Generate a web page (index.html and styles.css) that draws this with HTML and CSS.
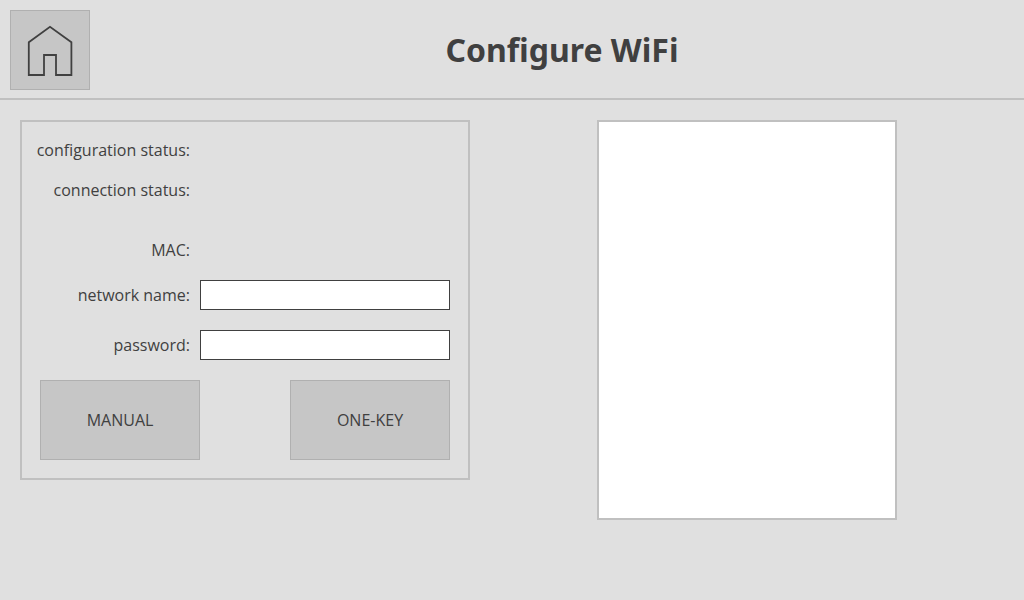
FILE: index.html
```html
<!DOCTYPE html>
<html lang="en">
<head>
<meta charset="utf-8">
<meta name="viewport" content="width=device-width, initial-scale=1">
<title>Configure WiFi</title>
<link rel="stylesheet" href="styles.css">
</head>
<body class="page">
<header class="topbar">
  <button class="button home" type="button" aria-label="Home">
    <svg class="home-icon" viewBox="0 0 50 56" width="50" height="56" aria-hidden="true">
      <path d="M3.8 53V20.2L25 4.8L46.4 20.2V53H31V33H19V53Z" fill="none" stroke="currentColor" stroke-width="1.8"/>
    </svg>
  </button>
  <h1 class="title">Configure WiFi</h1>
</header>
<main class="content">
  <form class="panel">
    <div class="row">
      <span class="label">configuration status:</span>
      <output class="value"></output>
    </div>
    <div class="row">
      <span class="label">connection status:</span>
      <output class="value"></output>
    </div>
    <div class="row row-spaced">
      <span class="label">MAC:</span>
      <output class="value"></output>
    </div>
    <div class="row">
      <label class="label" for="network">network name:</label>
      <input class="field" id="network" type="text">
    </div>
    <div class="row">
      <label class="label" for="password">password:</label>
      <input class="field" id="password" type="password">
    </div>
    <div class="actions">
      <button class="button action" type="button">MANUAL</button>
      <button class="button action" type="button">ONE-KEY</button>
    </div>
  </form>
  <section class="networks">
    <div class="network-list"></div>
  </section>
</main>
</body>
</html>
```

FILE: styles.css
```css
* {
  box-sizing: border-box;
}

.page {
  margin: 0;
  background: #e0e0e0;
  color: #404040;
  font: 16px/20px "Open Sans", "Noto Sans", sans-serif;
}

.topbar {
  display: flex;
  align-items: center;
  gap: 10px;
  padding: 10px 0 8px 10px;
  border-bottom: 2px solid #c0c0c0;
}

.title {
  flex: 1;
  margin: 0;
  text-align: center;
  font-family: "Noto Sans", "Open Sans", sans-serif;
  font-size: 32px;
  line-height: 40px;
}

.button {
  display: flex;
  align-items: center;
  justify-content: center;
  height: 80px;
  padding: 0;
  border: 1px solid #b0b0b0;
  background: #c6c6c6;
  color: inherit;
  font: inherit;
}

.home {
  width: 80px;
}

.content {
  display: flex;
  align-items: flex-start;
  padding: 20px 0 20px 20px;
}

.panel {
  display: flex;
  flex-direction: column;
  gap: 20px;
  width: 450px;
  padding: 18px 18px 18px 0;
  border: 2px solid #c0c0c0;
}

.row {
  display: grid;
  grid-template-columns: 168px 1fr;
  align-items: center;
  column-gap: 10px;
}

.row-spaced {
  margin-top: 20px;
}

.label {
  text-align: right;
}

.field {
  width: 100%;
  height: 30px;
  padding: 0 6px;
  border: 1px solid #404040;
  border-radius: 0;
  background: #fff;
  color: inherit;
  font: inherit;
}

.actions {
  display: flex;
  justify-content: space-between;
  padding-left: 18px;
}

.action {
  width: 160px;
}

.networks {
  flex: 1;
  display: flex;
  justify-content: center;
}

.network-list {
  width: 300px;
  height: 400px;
  border: 2px solid #c0c0c0;
  background: #fff;
}
```
